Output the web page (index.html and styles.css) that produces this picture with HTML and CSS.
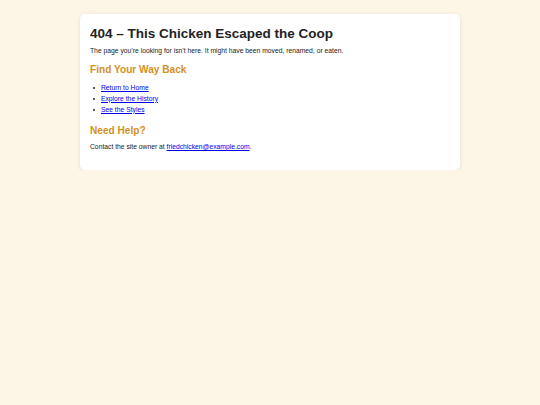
FILE: index.html
```html
<!DOCTYPE html>
<html lang="en">
<head>
<meta charset="utf-8">
<title>404 – This Chicken Escaped the Coop</title>
<link rel="stylesheet" href="styles.css">
</head>
<body>
<main class="card">
  <h1 class="title">404 – This Chicken Escaped the Coop</h1>
  <p class="lead">The page you’re looking for isn’t here. It might have been moved, renamed, or eaten.</p>
  <h2 class="section">Find Your Way Back</h2>
  <ul class="links">
    <li><a href="#">Return to Home</a></li>
    <li><a href="#">Explore the History</a></li>
    <li><a href="#">See the Styles</a></li>
  </ul>
  <h2 class="section section-help">Need Help?</h2>
  <p class="contact">Contact the site owner at <a href="#">friedchicken@example.com</a>.</p>
</main>
</body>
</html>
```

FILE: styles.css
```css
html, body {
  margin: 0;
  padding: 0;
}
body {
  background: #fdf5e6;
  font-family: "Liberation Sans", Arial, sans-serif;
  font-size: 6.75px;
  line-height: 1.5;
  color: #222;
  padding: 14px 0 0;
}
.card {
  box-sizing: border-box;
  width: 380px;
  margin: 0 auto;
  background: #fff;
  border-radius: 5px;
  box-shadow: 0 1px 4px rgba(0, 0, 0, 0.1);
  padding: 12px 10px 18px;
}
.title {
  margin: 0;
  font-size: 13.5px;
  line-height: 1.2;
  color: #222;
  font-weight: bold;
}
.lead {
  margin: 3.5px 0 0;
}
.section {
  margin: 8.5px 0 0;
  font-size: 10.125px;
  line-height: 1.2;
  color: #d4901c;
  font-weight: bold;
}
.section-help {
  margin-top: 9.5px;
}
.links {
  margin: 6.5px 0 0;
  padding-left: 11px;
  list-style: none;
}
.links li {
  line-height: 10.8px;
}
.links li::before {
  content: "";
  display: inline-block;
  width: 2.2px;
  height: 2.2px;
  border-radius: 50%;
  background: #222;
  margin-left: -7.8px;
  margin-right: 5.6px;
  vertical-align: middle;
}
a {
  color: #0000ee;
}
.contact {
  margin: 5px 0 0;
}
```
